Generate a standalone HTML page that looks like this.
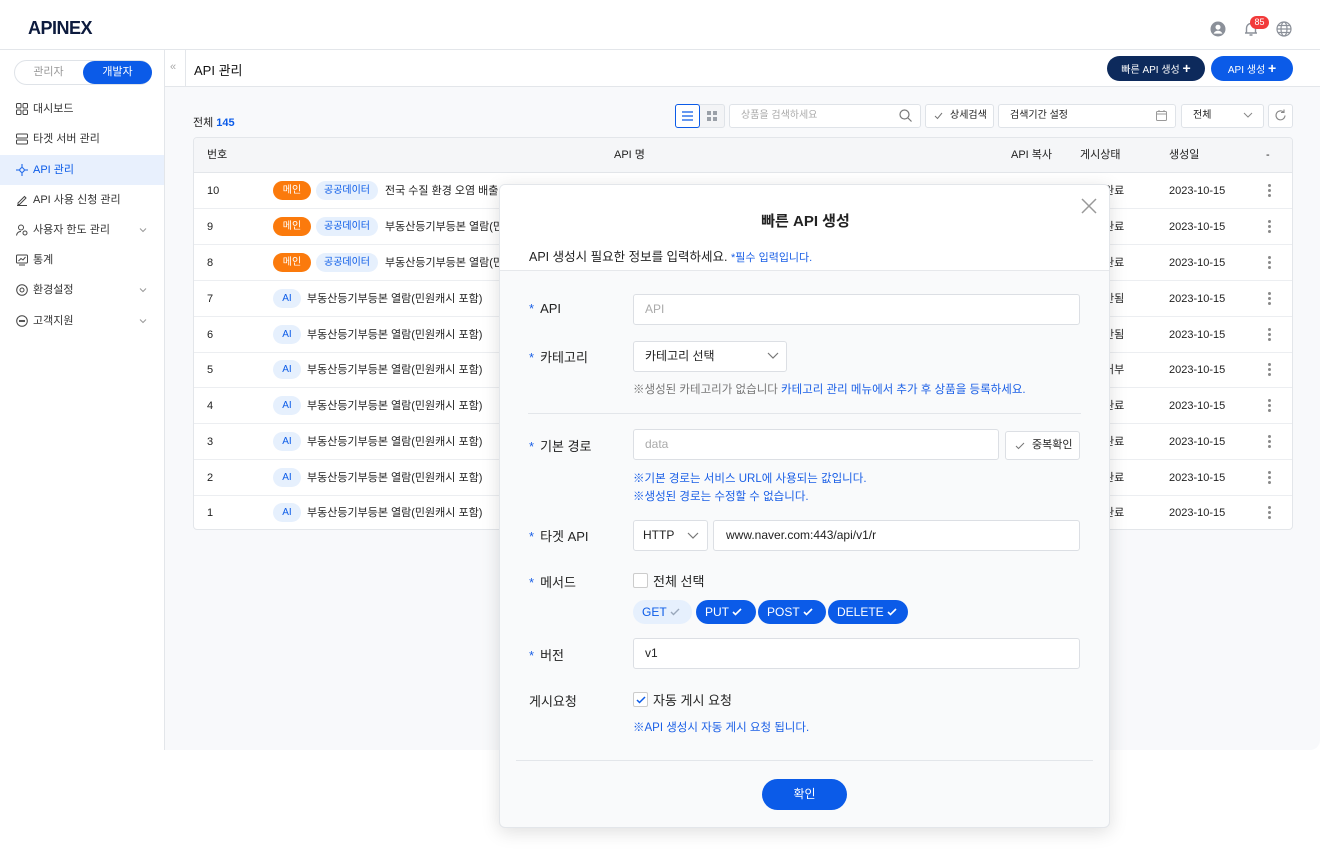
<!DOCTYPE html>
<html><head><meta charset="utf-8"><style>
*{box-sizing:border-box;margin:0;padding:0}
body{width:1320px;height:860px;position:relative;background:#fff;font-family:"Liberation Sans","Noto Sans CJK KR",sans-serif;color:#222;font-size:12px;overflow:hidden}
.a{position:absolute}
.hdr{left:0;top:0;width:1320px;height:50px;border-bottom:1px solid #e3e6ea;background:#fff}
.logo{left:28px;top:18px;font-weight:bold;font-size:18px;color:#0d1b3e;letter-spacing:-0.5px}
.side{left:0;top:50px;width:165px;height:700px;border-right:1px solid #e3e6ea;background:#fff}
.tog{left:14px;top:60px;width:138px;height:25px;border:1px solid #dfe3e8;border-radius:13px;background:#fff}
.tog span{position:absolute;top:0;height:23px;line-height:23px;font-size:11px;text-align:center}
.mi{left:0;width:164px;height:30px;line-height:30px;padding-left:33px;font-size:11px;color:#333}
.mi svg{position:absolute;left:16px;top:9px}
.mi .chev{position:absolute;left:138px;top:10px}
.main{left:165px;top:50px;width:1155px;height:700px;background:#f8f9fb;border-bottom-right-radius:10px}
.tbar{left:165px;top:50px;width:1155px;height:37px;background:#fff;border-bottom:1px solid #e3e6ea}
.btn{height:25px;line-height:25px;border-radius:13px;color:#fff;font-size:10px;text-align:center}
.box{background:#fff;border:1px solid #dfe3e8;border-radius:3px}
.tbl{left:193px;top:137px;width:1100px;height:393px;background:#fff;border:1px solid #e3e6ea;border-radius:4px;overflow:hidden}
.th{left:0;top:0;width:1100px;height:35px;background:#f5f6f8;border-bottom:1px solid #e3e6ea}
.th span{position:absolute;top:0;line-height:35px;font-size:11px}
.row{left:0;width:1100px;height:36px;border-bottom:1px solid #eceef1;font-size:11px}
.row>span{position:absolute;top:0;line-height:36px}
.tag{position:absolute;top:8px;height:19px;line-height:19px;border-radius:10px;font-size:10px;text-align:center;font-style:normal}
.dots{position:absolute;left:1074px;top:11px!important;width:3px;line-height:0!important}
.dots i{display:block;width:3px;height:3px;background:#888;border-radius:50%;margin-bottom:2px}
.modal{left:499px;top:184px;width:611px;height:644px;background:#f9fafb;border:1px solid #e3e6ea;border-radius:6px;box-shadow:0 4px 18px rgba(0,0,0,.13);overflow:hidden}
.mh{left:0;top:0;width:611px;height:86px;background:#fff;border-bottom:1px solid #e6e8eb}
.lbl{font-size:13px;color:#222}
.lbl b{color:#1a5fe6;font-weight:normal;margin-right:6px}
.inp{background:#fff;border:1px solid #dcdfe4;border-radius:3px;height:31px;line-height:29px;padding-left:11px;font-size:12px}
.note{font-size:11.5px;color:#1a5fe6}
.chip{height:24px;line-height:24px;border-radius:12px;font-size:12px;padding-left:9px;color:#fff;background:#0b5be8}
.chip svg{margin-left:3px;vertical-align:0}
.bt{line-height:22px}
</style></head><body>
<div class="a hdr"></div>
<div class="a logo">APINEX</div>
<svg class="a" style="left:1210px;top:21px" width="16" height="16" viewBox="0 0 16 16"><circle cx="8" cy="8" r="7.5" fill="#8b9099"/><circle cx="8" cy="6.2" r="2.5" fill="#fff"/><path d="M3.6 12.6c1-2 2.6-2.8 4.4-2.8s3.4.8 4.4 2.8" fill="#fff"/></svg>
<svg class="a" style="left:1243px;top:21px" width="16" height="16" viewBox="0 0 16 16" fill="none" stroke="#8b9099" stroke-width="1.4"><path d="M3.5 12V7a4.5 4.5 0 0 1 9 0v5zM2 12h12M6.5 14h3"/></svg>
<div class="a" style="left:1250px;top:16px;width:19px;height:13px;border-radius:7px;background:#f23a3a;color:#fff;font-size:9px;line-height:13px;text-align:center">85</div>
<svg class="a" style="left:1276px;top:21px" width="16" height="16" viewBox="0 0 16 16" fill="none" stroke="#8b9099" stroke-width="1.2"><circle cx="8" cy="8" r="7"/><ellipse cx="8" cy="8" rx="3" ry="7"/><path d="M1 8h14M2 4.5h12M2 11.5h12"/></svg>

<div class="a side"></div>
<div class="a tog"><span style="left:0;width:67px;color:#999">관리자</span><span style="left:68px;width:69px;background:#0b5be8;color:#fff;border-radius:12px">개발자</span></div>
<div class="a mi" style="top:94px">대시보드<svg width="12" height="12" viewBox="0 0 12 12" fill="none" stroke="#444"><rect x=".5" y=".5" width="4.5" height="4.5" rx="1"/><rect x="7" y=".5" width="4.5" height="4.5" rx="1"/><rect x=".5" y="7" width="4.5" height="4.5" rx="1"/><rect x="7" y="7" width="4.5" height="4.5" rx="1"/></svg></div>
<div class="a mi" style="top:124px">타겟 서버 관리<svg width="12" height="12" viewBox="0 0 12 12" fill="none" stroke="#444"><rect x=".5" y="1" width="11" height="4" rx="1"/><rect x=".5" y="7" width="11" height="4" rx="1"/></svg></div>
<div class="a mi" style="top:155px;background:#e8f0fd;color:#0b5be8">API 관리<svg width="12" height="12" viewBox="0 0 12 12" fill="none" stroke="#0b5be8"><circle cx="6" cy="6" r="2.2"/><path d="M6 0v3.8M6 8.2V12M0 6h3.8M8.2 6H12"/></svg></div>
<div class="a mi" style="top:185px">API 사용 신청 관리<svg width="12" height="12" viewBox="0 0 12 12" fill="none" stroke="#444"><path d="M2 9l6.5-6.5 1.5 1.5L3.5 10.5H2zM1 11.5h10"/></svg></div>
<div class="a mi" style="top:215px">사용자 한도 관리<svg width="12" height="12" viewBox="0 0 12 12" fill="none" stroke="#444"><circle cx="5" cy="3.5" r="2.5"/><path d="M.5 11.5c.5-3 2.5-4 4.5-4"/><circle cx="9" cy="9" r="2"/></svg><svg class="chev" width="10" height="10" viewBox="0 0 10 10" fill="none" stroke="#999"><path d="M2 3.5l3 3 3-3"/></svg></div>
<div class="a mi" style="top:245px">통계<svg width="12" height="12" viewBox="0 0 12 12" fill="none" stroke="#444"><rect x=".5" y="1" width="11" height="8" rx="1"/><path d="M2.5 7l2.5-2.5 2 1.5 2.5-3M3 11h6"/></svg></div>
<div class="a mi" style="top:275px">환경설정<svg width="12" height="12" viewBox="0 0 12 12" fill="none" stroke="#444"><circle cx="6" cy="6" r="5.3"/><circle cx="6" cy="6" r="2"/></svg><svg class="chev" width="10" height="10" viewBox="0 0 10 10" fill="none" stroke="#999"><path d="M2 3.5l3 3 3-3"/></svg></div>
<div class="a mi" style="top:306px">고객지원<svg width="12" height="12" viewBox="0 0 12 12" fill="none" stroke="#444"><circle cx="6" cy="6" r="5.3"/><circle cx="4" cy="6" r=".6" fill="#444"/><circle cx="6" cy="6" r=".6" fill="#444"/><circle cx="8" cy="6" r=".6" fill="#444"/></svg><svg class="chev" width="10" height="10" viewBox="0 0 10 10" fill="none" stroke="#999"><path d="M2 3.5l3 3 3-3"/></svg></div>

<div class="a main"></div>
<div class="a tbar"></div>
<div class="a" style="left:185px;top:50px;width:1px;height:37px;background:#e3e6ea"></div>
<div class="a" style="left:170px;top:61px;color:#aaa;font-size:11px">«</div>
<div class="a" style="left:194px;top:60px;font-size:13px;color:#111">API 관리</div>
<div class="a btn" style="left:1107px;top:56px;width:98px;background:#0d2a5c">빠른 API 생성 <b style="font-size:14px">+</b></div>
<div class="a btn" style="left:1211px;top:56px;width:82px;background:#0b5be8">API 생성 <b style="font-size:14px">+</b></div>

<div class="a" style="left:193px;top:114px;font-size:11px">전체 <b style="color:#0b5be8">145</b></div>
<div class="a box" style="left:675px;top:104px;width:50px;height:24px;background:#f3f4f6"></div>
<div class="a" style="left:675px;top:104px;width:25px;height:24px;border:1px solid #0b5be8;background:#fff;border-radius:3px"></div>
<svg class="a" style="left:682px;top:111px" width="11" height="10" viewBox="0 0 11 10" stroke="#0b5be8" stroke-width="1.3"><path d="M0 1h11M0 5h11M0 9h11"/></svg>
<svg class="a" style="left:707px;top:111px" width="10" height="10" viewBox="0 0 10 10" fill="#9aa0a8"><rect width="4" height="4"/><rect x="6" width="4" height="4"/><rect y="6" width="4" height="4"/><rect x="6" y="6" width="4" height="4"/></svg>
<div class="a box bt" style="left:729px;top:104px;width:192px;height:24px;color:#aaa;font-size:10px;padding-left:11px">상품을 검색하세요</div>
<svg class="a" style="left:899px;top:109px" width="13" height="13" viewBox="0 0 13 13" fill="none" stroke="#777" stroke-width="1.2"><circle cx="5.5" cy="5.5" r="4.5"/><path d="M9 9l3.5 3.5"/></svg>
<div class="a box bt" style="left:925px;top:104px;width:69px;height:24px;font-size:10px;padding-left:24px">상세검색</div>
<svg class="a" style="left:934px;top:112px" width="9" height="8" viewBox="0 0 9 8" fill="none" stroke="#777"><path d="M1 4l2.5 2.5L8 1"/></svg>
<div class="a box bt" style="left:998px;top:104px;width:178px;height:24px;font-size:10px;padding-left:11px">검색기간 설정</div>
<svg class="a" style="left:1156px;top:110px" width="11" height="11" viewBox="0 0 11 11" fill="none" stroke="#999"><rect x=".5" y="1.5" width="10" height="9" rx="1"/><path d="M.5 4h10M3 0v2M8 0v2"/></svg>
<div class="a box bt" style="left:1181px;top:104px;width:83px;height:24px;font-size:10px;padding-left:11px">전체</div>
<svg class="a" style="left:1243px;top:111px" width="10" height="8" viewBox="0 0 10 8" fill="none" stroke="#888"><path d="M1 2l4 4 4-4"/></svg>
<div class="a box" style="left:1268px;top:104px;width:25px;height:24px"></div>
<svg class="a" style="left:1274px;top:109px" width="13" height="13" viewBox="0 0 13 13" fill="none" stroke="#888" stroke-width="1.1"><path d="M11 6.5A4.5 4.5 0 1 1 9.5 3M10 .5V3.5H7"/></svg>

<div class="a tbl">
<div class="a th"><span style="left:13px">번호</span><span style="left:420px">API 명</span><span style="left:817px">API 복사</span><span style="left:886px">게시상태</span><span style="left:975px">생성일</span><span style="left:1072px">-</span></div>
<div class="a row" style="top:35px"><span style="left:13px">10</span><i class="tag" style="left:79px;width:38px;background:#fb7a0c;color:#fff">메인</i><i class="tag" style="left:122px;width:62px;background:#e6f0fd;color:#0b5be8">공공데이터</i><span style="left:191px">전국 수질 환경 오염 배출 시설</span><span style="left:910px">완료</span><span style="left:975px">2023-10-15</span><span class="dots"><i></i><i></i><i></i></span></div>
<div class="a row" style="top:71px"><span style="left:13px">9</span><i class="tag" style="left:79px;width:38px;background:#fb7a0c;color:#fff">메인</i><i class="tag" style="left:122px;width:62px;background:#e6f0fd;color:#0b5be8">공공데이터</i><span style="left:191px">부동산등기부등본 열람(민원캐시 포함)</span><span style="left:910px">완료</span><span style="left:975px">2023-10-15</span><span class="dots"><i></i><i></i><i></i></span></div>
<div class="a row" style="top:107px"><span style="left:13px">8</span><i class="tag" style="left:79px;width:38px;background:#fb7a0c;color:#fff">메인</i><i class="tag" style="left:122px;width:62px;background:#e6f0fd;color:#0b5be8">공공데이터</i><span style="left:191px">부동산등기부등본 열람(민원캐시 포함)</span><span style="left:910px">완료</span><span style="left:975px">2023-10-15</span><span class="dots"><i></i><i></i><i></i></span></div>
<div class="a row" style="top:143px"><span style="left:13px">7</span><i class="tag" style="left:79px;width:28px;background:#e6f0fd;color:#0b5be8">AI</i><span style="left:113px">부동산등기부등본 열람(민원캐시 포함)</span><span style="left:910px">안됨</span><span style="left:975px">2023-10-15</span><span class="dots"><i></i><i></i><i></i></span></div>
<div class="a row" style="top:179px"><span style="left:13px">6</span><i class="tag" style="left:79px;width:28px;background:#e6f0fd;color:#0b5be8">AI</i><span style="left:113px">부동산등기부등본 열람(민원캐시 포함)</span><span style="left:910px">안됨</span><span style="left:975px">2023-10-15</span><span class="dots"><i></i><i></i><i></i></span></div>
<div class="a row" style="top:214px"><span style="left:13px">5</span><i class="tag" style="left:79px;width:28px;background:#e6f0fd;color:#0b5be8">AI</i><span style="left:113px">부동산등기부등본 열람(민원캐시 포함)</span><span style="left:910px">거부</span><span style="left:975px">2023-10-15</span><span class="dots"><i></i><i></i><i></i></span></div>
<div class="a row" style="top:250px"><span style="left:13px">4</span><i class="tag" style="left:79px;width:28px;background:#e6f0fd;color:#0b5be8">AI</i><span style="left:113px">부동산등기부등본 열람(민원캐시 포함)</span><span style="left:910px">완료</span><span style="left:975px">2023-10-15</span><span class="dots"><i></i><i></i><i></i></span></div>
<div class="a row" style="top:286px"><span style="left:13px">3</span><i class="tag" style="left:79px;width:28px;background:#e6f0fd;color:#0b5be8">AI</i><span style="left:113px">부동산등기부등본 열람(민원캐시 포함)</span><span style="left:910px">완료</span><span style="left:975px">2023-10-15</span><span class="dots"><i></i><i></i><i></i></span></div>
<div class="a row" style="top:322px"><span style="left:13px">2</span><i class="tag" style="left:79px;width:28px;background:#e6f0fd;color:#0b5be8">AI</i><span style="left:113px">부동산등기부등본 열람(민원캐시 포함)</span><span style="left:910px">완료</span><span style="left:975px">2023-10-15</span><span class="dots"><i></i><i></i><i></i></span></div>
<div class="a row" style="top:357px;border-bottom:none"><span style="left:13px">1</span><i class="tag" style="left:79px;width:28px;background:#e6f0fd;color:#0b5be8">AI</i><span style="left:113px">부동산등기부등본 열람(민원캐시 포함)</span><span style="left:910px">완료</span><span style="left:975px">2023-10-15</span><span class="dots"><i></i><i></i><i></i></span></div>
</div>

<div class="a modal">
<div class="a mh"></div>
<div class="a" style="left:0;top:25px;width:611px;text-align:center;font-size:15px;font-weight:bold;color:#222">빠른 API 생성</div>
<svg class="a" style="left:580px;top:12px" width="18" height="18" viewBox="0 0 18 18" stroke="#999" stroke-width="1.5"><path d="M2 2l14 14M16 2L2 16"/></svg>
<div class="a" style="left:29px;top:61px;font-size:12.5px">API 생성시 필요한 정보를 입력하세요. <span style="color:#1a5fe6;font-size:11px">*필수 입력입니다.</span></div>

<div class="a lbl" style="left:29px;top:116px"><b>*</b>API</div>
<div class="a inp" style="left:133px;top:109px;width:447px;color:#aaa">API</div>

<div class="a lbl" style="left:29px;top:162px"><b>*</b>카테고리</div>
<div class="a inp" style="left:133px;top:156px;width:154px">카테고리 선택</div>
<svg class="a" style="left:267px;top:166px" width="12" height="9" viewBox="0 0 12 9" fill="none" stroke="#777" stroke-width="1.2"><path d="M1 2l5 5 5-5"/></svg>
<div class="a" style="left:133px;top:196px;font-size:11.5px;color:#777">※생성된 카테고리가 없습니다 <span style="color:#1a5fe6">카테고리 관리 메뉴에서 추가 후 상품을 등록하세요.</span></div>
<div class="a" style="left:28px;top:228px;width:553px;height:1px;background:#e3e6ea"></div>

<div class="a lbl" style="left:29px;top:251px"><b>*</b>기본 경로</div>
<div class="a inp" style="left:133px;top:244px;width:366px;color:#aaa">data</div>
<div class="a inp" style="left:505px;top:246px;width:75px;height:29px;line-height:27px;padding-left:26px;font-size:11px">중복확인</div>
<svg class="a" style="left:515px;top:257px" width="10" height="8" viewBox="0 0 10 8" fill="none" stroke="#777"><path d="M1 4l2.5 2.5L9 1"/></svg>
<div class="a note" style="left:133px;top:285px">※기본 경로는 서비스 URL에 사용되는 값입니다.</div>
<div class="a note" style="left:133px;top:303px">※생성된 경로는 수정할 수 없습니다.</div>

<div class="a lbl" style="left:29px;top:341px"><b>*</b>타겟 API</div>
<div class="a inp" style="left:133px;top:335px;width:75px;padding-left:9px">HTTP</div>
<svg class="a" style="left:187px;top:346px" width="12" height="9" viewBox="0 0 12 9" fill="none" stroke="#777" stroke-width="1.2"><path d="M1 2l5 5 5-5"/></svg>
<div class="a inp" style="left:213px;top:335px;width:367px;padding-left:12px">www.naver.com:443/api/v1/r</div>

<div class="a lbl" style="left:29px;top:387px"><b>*</b>메서드</div>
<div class="a" style="left:133px;top:388px;width:15px;height:15px;border:1px solid #ccc;border-radius:2px;background:#fff"></div>
<div class="a" style="left:153px;top:386px;font-size:13px">전체 선택</div>
<div class="a chip" style="left:133px;top:415px;width:59px;background:#e6f0fd;color:#0b5be8">GET<svg width="10" height="8" viewBox="0 0 10 8" fill="none" stroke="#9aa8bb" stroke-width="1.4"><path d="M1 4l2.5 2.5L9 1"/></svg></div>
<div class="a chip" style="left:196px;top:415px;width:60px">PUT<svg width="10" height="8" viewBox="0 0 10 8" fill="none" stroke="#fff" stroke-width="1.6"><path d="M1 4l2.5 2.5L9 1"/></svg></div>
<div class="a chip" style="left:258px;top:415px;width:68px">POST<svg width="10" height="8" viewBox="0 0 10 8" fill="none" stroke="#fff" stroke-width="1.6"><path d="M1 4l2.5 2.5L9 1"/></svg></div>
<div class="a chip" style="left:328px;top:415px;width:80px">DELETE<svg width="10" height="8" viewBox="0 0 10 8" fill="none" stroke="#fff" stroke-width="1.6"><path d="M1 4l2.5 2.5L9 1"/></svg></div>

<div class="a lbl" style="left:29px;top:460px"><b>*</b>버전</div>
<div class="a inp" style="left:133px;top:453px;width:447px">v1</div>

<div class="a lbl" style="left:29px;top:506px">게시요청</div>
<div class="a" style="left:133px;top:507px;width:15px;height:15px;border:1px solid #ccc;border-radius:2px;background:#fff"></div>
<svg class="a" style="left:136px;top:511px" width="10" height="8" viewBox="0 0 10 8" fill="none" stroke="#0b5be8" stroke-width="1.5"><path d="M1 4l2.5 2.5L9 1"/></svg>
<div class="a" style="left:153px;top:505px;font-size:13px">자동 게시 요청</div>
<div class="a note" style="left:133px;top:534px">※API 생성시 자동 게시 요청 됩니다.</div>

<div class="a" style="left:16px;top:575px;width:577px;height:1px;background:#e3e6ea"></div>
<div class="a" style="left:262px;top:594px;width:85px;height:31px;border-radius:16px;background:#0b5be8;color:#fff;text-align:center;line-height:31px;font-size:12px">확인</div>
</div>
</body></html>
